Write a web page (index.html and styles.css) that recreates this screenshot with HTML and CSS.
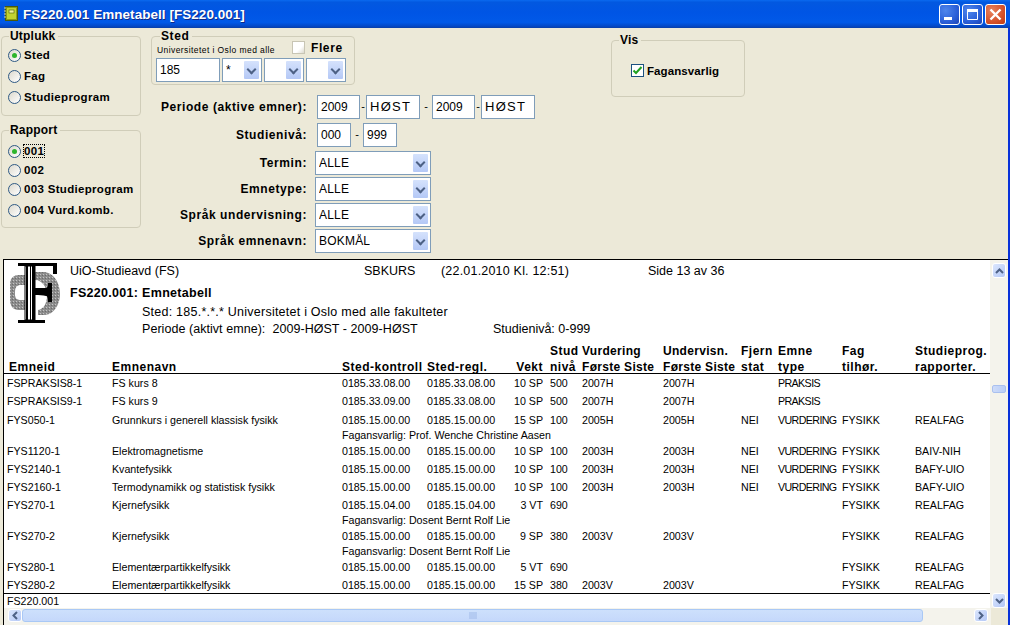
FILE: index.html
```html
<!DOCTYPE html>
<html lang="no">
<head>
<meta charset="utf-8">
<title>FS220.001 Emnetabell</title>
<link rel="stylesheet" href="styles.css">
</head>
<body>
<div class="window">
  <header class="titlebar">
    <svg class="appicon" width="18" height="18" viewBox="0 0 18 18"><rect x="3.500" y="1.500" width="12" height="14" fill="#8a9a18" stroke="#4a5a08"/><rect x="5" y="3" width="9" height="11" fill="#c2d230"/><rect x="7" y="5" width="5" height="3" fill="#f0f29a" stroke="#4a5a08" stroke-width=".6"/><path d="M2 3h2M2 6h2M2 9h2M2 12h2" stroke="#d8d8a0" stroke-width="1.200"/></svg>
    <span class="title">FS220.001 Emnetabell [FS220.001]</span>
    <div class="winbtns">
      <div class="winbtn"><svg width="21" height="21" viewBox="0 0 21 21"><rect x="5" y="13" width="8" height="3" fill="#fff"/></svg></div>
      <div class="winbtn"><svg width="21" height="21" viewBox="0 0 21 21"><path d="M5.500 5.500h10v10h-10z" fill="none" stroke="#fff"/><rect x="5" y="5" width="11" height="3" fill="#fff"/></svg></div>
      <div class="winbtn close"><svg width="21" height="21" viewBox="0 0 21 21"><path d="M5.500 5.500l10 10M15.500 5.500l-10 10" stroke="#fff" stroke-width="2.400"/></svg></div>
    </div>
  </header>

  <section class="form">
    <div class="leftcol">
      <div class="group utplukk">
        <span class="legend">Utplukk</span>
        <div class="radio"><i class="dot on"></i>Sted</div>
        <div class="radio"><i class="dot"></i>Fag</div>
        <div class="radio"><i class="dot"></i>Studieprogram</div>
      </div>
      <div class="group rapport">
        <span class="legend">Rapport</span>
        <div class="radio"><i class="dot on"></i><span class="focus">001</span></div>
        <div class="radio"><i class="dot"></i>002</div>
        <div class="radio"><i class="dot"></i>003 Studieprogram</div>
        <div class="radio"><i class="dot"></i>004 Vurd.komb.</div>
      </div>
    </div>

    <div class="midcol">
      <div class="group sted">
        <span class="legend">Sted</span>
        <div class="stedtop"><span class="stedname">Universitetet i Oslo med alle</span><i class="chk"></i><b class="flere">Flere</b></div>
        <div class="stedrow">
          <div class="inp w64 plain">185</div>
          <div class="combo w40"><span>*</span><i class="arrow"></i></div>
          <div class="combo w40"><span></span><i class="arrow"></i></div>
          <div class="combo w40"><span></span><i class="arrow"></i></div>
        </div>
      </div>
      <div class="fields">
        <div class="field"><label>Periode (aktive emner):</label><div class="inp w43 plain">2009</div><span class="dash">-</span><div class="inp w54 wide">HØST</div><span class="dash sp">-</span><div class="inp w43 plain">2009</div><span class="dash">-</span><div class="inp w54 wide">HØST</div></div>
        <div class="field"><label>Studienivå:</label><div class="inp w34 plain">000</div><span class="dash gap">-</span><div class="inp w34 plain">999</div></div>
        <div class="field sel"><label>Termin:</label><div class="combo w116 big"><span>ALLE</span><i class="arrow"></i></div></div>
        <div class="field sel"><label>Emnetype:</label><div class="combo w116 big"><span>ALLE</span><i class="arrow"></i></div></div>
        <div class="field sel"><label>Språk undervisning:</label><div class="combo w116 big"><span>ALLE</span><i class="arrow"></i></div></div>
        <div class="field sel"><label>Språk emnenavn:</label><div class="combo w116 big"><span>BOKMÅL</span><i class="arrow"></i></div></div>
      </div>
    </div>

    <div class="group vis">
      <span class="legend">Vis</span>
      <div class="vischeck"><i class="chk on"><svg width="11" height="11" viewBox="0 0 11 11"><path d="M1.500 5.500l2.500 2.500 5.500-6" fill="none" stroke="#21a121" stroke-width="2"/></svg></i>Fagansvarlig</div>
    </div>
  </section>

  <section class="report">
    <div class="viewport">
      <div class="page">
        <div class="rephead">
          <svg class="logo" width="56" height="64" viewBox="0 0 56 64">
            <defs><pattern id="st" width="3" height="3" patternUnits="userSpaceOnUse"><rect width="3" height="3" fill="#8c8c8c"/><rect width="1" height="1" fill="#c4c4c4"/><rect x="2" y="1" width="1" height="1" fill="#6c6c6c"/></pattern></defs>
            <path d="M3 22c0-6 4-9 9-9h6v10h-4c-4 0-6 2-6 7v3c0 3 2 5 6 5h4v10h-6c-6 0-9-4-9-10z" fill="url(#st)"/>
            <path d="M28 10h8c10 0 17 10 17 22 0 10-6 21-16 21h-6v-5c6-1 9-7 9-15 0-8-5-15-12-15z" fill="url(#st)"/>
            <path d="M11 1h39v3H11zM11 58h27v3H11zM46 4h4v8h-4z" fill="#000"/>
            <path d="M18 4h10v54H18z" fill="#fff" stroke="#000"/>
            <path d="M19 4h2v54h-2zM23 4h1v54h-1zM25 4h3v54h-3z" fill="#000"/>
            <path d="M28 26h11c1 0 2-1 2-5h4v19h-4c0-5-1-6-2-6-3-1-7-1-11-1z" fill="#000"/>
          </svg>
          <div class="headtext">
            <div class="hl1"><span class="c1">UiO-Studieavd (FS)</span><span class="c2">SBKURS</span><span class="c3">(22.01.2010 Kl. 12:51)</span><span class="c4">Side 13 av 36</span></div>
            <div class="hl2">FS220.001: Emnetabell</div>
            <div class="hl3 sted-line">Sted: 185.*.*.* Universitetet i Oslo med alle fakulteter</div>
            <div class="hl3"><span class="c5">Periode (aktivt emne):&nbsp; 2009-HØST - 2009-HØST</span><span>Studienivå: 0-999</span></div>
          </div>
        </div>

        <div class="row thead">
          <span>Emneid</span><span>Emnenavn</span><span>Sted-kontroll</span><span>Sted-regl.</span><span class="r">Vekt</span>
          <span>Stud<br>nivå</span><span class="stack">Vurdering<br>Første Siste</span><span class="stack">Undervisn.<br>Første Siste</span>
          <span>Fjern<br>stat</span><span>Emne<br>type</span><span>Fag<br>tilhør.</span><span>Studieprog.<br>rapporter.</span>
        </div>

        <div class="rows">
          <div class="row"><span>FSPRAKSIS8-1</span><span>FS kurs 8</span><span>0185.33.08.00</span><span>0185.33.08.00</span><span class="r">10 SP</span><span>500</span><span>2007H</span><span>2007H</span><span></span><span>PRAKSIS</span><span></span><span></span></div>
          <div class="row"><span>FSPRAKSIS9-1</span><span>FS kurs 9</span><span>0185.33.09.00</span><span>0185.33.08.00</span><span class="r">10 SP</span><span>500</span><span>2007H</span><span>2007H</span><span></span><span>PRAKSIS</span><span></span><span></span></div>
          <div class="row"><span>FYS050-1</span><span>Grunnkurs i generell klassisk fysikk</span><span>0185.15.00.00</span><span>0185.15.00.00</span><span class="r">15 SP</span><span>100</span><span>2005H</span><span>2005H</span><span>NEI</span><span>VURDERING</span><span>FYSIKK</span><span>REALFAG</span></div>
          <div class="note">Fagansvarlig: Prof. Wenche Christine Aasen</div>
          <div class="row"><span>FYS1120-1</span><span>Elektromagnetisme</span><span>0185.15.00.00</span><span>0185.15.00.00</span><span class="r">10 SP</span><span>100</span><span>2003H</span><span>2003H</span><span>NEI</span><span>VURDERING</span><span>FYSIKK</span><span>BAIV-NIH</span></div>
          <div class="row"><span>FYS2140-1</span><span>Kvantefysikk</span><span>0185.15.00.00</span><span>0185.15.00.00</span><span class="r">10 SP</span><span>100</span><span>2003H</span><span>2003H</span><span>NEI</span><span>VURDERING</span><span>FYSIKK</span><span>BAFY-UIO</span></div>
          <div class="row"><span>FYS2160-1</span><span>Termodynamikk og statistisk fysikk</span><span>0185.15.00.00</span><span>0185.15.00.00</span><span class="r">10 SP</span><span>100</span><span>2003H</span><span>2003H</span><span>NEI</span><span>VURDERING</span><span>FYSIKK</span><span>BAFY-UIO</span></div>
          <div class="row"><span>FYS270-1</span><span>Kjernefysikk</span><span>0185.15.04.00</span><span>0185.15.04.00</span><span class="r">3 VT</span><span>690</span><span></span><span></span><span></span><span></span><span>FYSIKK</span><span>REALFAG</span></div>
          <div class="note">Fagansvarlig: Dosent Bernt Rolf Lie</div>
          <div class="row"><span>FYS270-2</span><span>Kjernefysikk</span><span>0185.15.00.00</span><span>0185.15.00.00</span><span class="r">9 SP</span><span>380</span><span>2003V</span><span>2003V</span><span></span><span></span><span>FYSIKK</span><span>REALFAG</span></div>
          <div class="note">Fagansvarlig: Dosent Bernt Rolf Lie</div>
          <div class="row"><span>FYS280-1</span><span>Elementærpartikkelfysikk</span><span>0185.15.00.00</span><span>0185.15.00.00</span><span class="r">5 VT</span><span>690</span><span></span><span></span><span></span><span></span><span>FYSIKK</span><span>REALFAG</span></div>
          <div class="row"><span>FYS280-2</span><span>Elementærpartikkelfysikk</span><span>0185.15.00.00</span><span>0185.15.00.00</span><span class="r">15 SP</span><span>380</span><span>2003V</span><span>2003V</span><span></span><span></span><span>FYSIKK</span><span>REALFAG</span></div>
        </div>
        <div class="repfoot">FS220.001</div>
      </div>
      <div class="vscroll">
        <div class="sbtn"><svg width="9" height="6" viewBox="0 0 9 6"><path d="M1 5l3.500-3.500L8 5" fill="none" stroke="#4d6185" stroke-width="2"/></svg></div>
        <div class="vtrack"><div class="vthumb"></div></div>
        <div class="sbtn"><svg width="9" height="6" viewBox="0 0 9 6"><path d="M1 1l3.500 3.500L8 1" fill="none" stroke="#4d6185" stroke-width="2"/></svg></div>
      </div>
    </div>
    <div class="hscroll">
      <div class="sbtn"><svg width="6" height="9" viewBox="0 0 6 9"><path d="M5 1L1.500 4.500 5 8" fill="none" stroke="#4d6185" stroke-width="2"/></svg></div>
      <div class="hthumb"><svg width="8" height="7" viewBox="0 0 8 7"><path d="M1 0v7M3 0v7M5 0v7M7 0v7" stroke="#9fb9e8"/></svg></div>
      <div class="htrack"></div>
      <div class="sbtn"><svg width="6" height="9" viewBox="0 0 6 9"><path d="M1 1l3.500 3.500L1 8" fill="none" stroke="#4d6185" stroke-width="2"/></svg></div>
    </div>
  </section>
</div>
</body>
</html>
```

FILE: styles.css
```css
* { box-sizing: border-box; }
html, body { margin: 0; padding: 0; }
body { width: 1010px; height: 625px; overflow: hidden; background: #ece9d8; font-family: "Liberation Sans", Arial, sans-serif; color: #000; }
.window { width: 1010px; height: 625px; display: flex; flex-direction: column; border-right: 2px solid #0831d9; }

.titlebar { height: 28px; flex: none; display: flex; align-items: center; padding: 0 4px 0 2px; background: linear-gradient(#0a6af0 0, #0258e0 8%, #0055e5 45%, #0159e8 80%, #0349c8 93%, #0a3ea8 100%); margin-right: -2px; }
.appicon { flex: none; margin-right: 3px; }
.title { color: #fff; font: bold 13.500px "Liberation Sans", sans-serif; letter-spacing: .04px; text-shadow: 1px 1px 0 #0f2a86; }
.winbtns { margin-left: auto; display: flex; gap: 2px; }
.winbtn { width: 21px; height: 21px; border: 1px solid #fff; border-radius: 3px; background: radial-gradient(circle at 30% 30%, #4f86ec, #2a5fd8 60%, #1d43b4); }
.winbtn svg { display: block; margin: -1px; }
.winbtn.close { background: radial-gradient(circle at 30% 30%, #e8835e, #d4522b 60%, #c03a10); }

.form { height: 231px; flex: none; display: flex; padding-top: 8px; }
.group { position: relative; border: 1px solid #d0cdb9; border-radius: 4px; }
.legend { position: absolute; top: -8px; left: 7px; background: #ece9d8; padding: 0 3px 0 1px; font-size: 12px; font-weight: bold; line-height: 14px; letter-spacing: .2px; }
.sted .legend { left: 8px; letter-spacing: .6px; }
.leftcol { width: 140px; margin-left: 1px; flex: none; display: flex; flex-direction: column; gap: 14px; }
.utplukk { height: 80px; padding-top: 10px; display: flex; flex-direction: column; gap: 5px; }
.rapport { height: 98px; padding-top: 12px; display: flex; flex-direction: column; gap: 3px; }
.rapport .radio:last-child { margin-top: 2px; }
.radio { display: flex; align-items: center; height: 16px; padding-left: 6px; font-size: 11.500px; font-weight: bold; letter-spacing: .32px; }
.dot { width: 13px; height: 13px; border-radius: 50%; border: 1px solid #2f5a85; background: linear-gradient(135deg, #dcd9cd, #fff); margin-right: 3px; position: relative; flex: none; }
.dot.on::after { content: ""; position: absolute; left: 3px; top: 3px; width: 5px; height: 5px; border-radius: 50%; background: #2db52d; }
.focus { outline: 1px dotted #000; outline-offset: 0; }

.midcol { width: 395px; margin-left: 10px; flex: none; display: flex; flex-direction: column; }
.sted { width: 204px; height: 49px; padding: 6px 4px 0 4px; }
.stedtop { display: flex; align-items: center; height: 14px; }
.stedname { font-size: 8.500px; letter-spacing: .42px; margin-left: 1px; white-space: nowrap; }
.chk { width: 13px; height: 13px; flex: none; display: block; margin: -6px 0 0 17px; background: linear-gradient(135deg, #fff 60%, #dcd9cd); border: 1px solid #c8c5b4; }
.flere { font-size: 12px; letter-spacing: .6px; margin: -4px 0 0 6px; }
.stedrow { display: flex; gap: 2px; margin-top: 1px; }

.inp, .combo { height: 24px; border: 1px solid #7f9db9; background: #fff; display: flex; align-items: center; flex: none; }
.inp.plain { font-size: 12px; padding-left: 3px; }
.inp.w64 { width: 64px; }
.inp.w43 { width: 43px; }
.inp.w54 { width: 54px; }
.inp.w34 { width: 34px; }
.inp.wide { font-size: 13px; letter-spacing: 1.250px; padding-left: 3px; }
.w40 { width: 40px; }
.w116 { width: 116px; margin-left: -2px; }
.combo { padding: 2px 2px 2px 3px; justify-content: space-between; font-size: 12px; }
.combo span { overflow: hidden; }
.combo.big span { letter-spacing: .2px; }
.arrow { width: 15px; height: 18px; border-radius: 1px; background: linear-gradient(#d5e2fc, #b4c8f6); position: relative; flex: none; display: block; }
.arrow::after { content: ""; position: absolute; left: 4px; top: 5px; width: 5px; height: 5px; border-right: 2px solid #4d6185; border-bottom: 2px solid #4d6185; transform: rotate(45deg); }

.fields { padding-top: 9px; display: flex; flex-direction: column; }
.field { display: flex; align-items: center; height: 26px; }
.field:first-child { height: 25px; }
.field:nth-child(2) { height: 31px; }
.field label { width: 156px; text-align: right; margin-right: 10px; font-size: 12px; font-weight: bold; letter-spacing: .58px; white-space: nowrap; flex: none; }
.dash { width: 4px; text-align: center; font-size: 11px; flex: none; margin: 0 1px 2px 1px; }
.dash.sp { margin: 0 4px 2px 4px; }
.dash.gap { margin: 0 4px 2px 4px; }

.vis { width: 134px; height: 57px; margin-left: 65px; margin-top: 4px; }
.vischeck { display: flex; align-items: center; margin: 23px 0 0 19px; font-size: 11.500px; font-weight: bold; letter-spacing: .1px; }
.chk.on { width: 13px; height: 13px; border: 1px solid #1c5180; background: #fff; margin: 0 3px 0 0; padding: 0; }
.chk.on svg { display: block; }

.report { flex: 1; min-height: 0; margin-left: 3px; border-top: 1px solid #000; border-left: 1px solid #000; display: flex; flex-direction: column; }
.viewport { flex: 1; min-height: 0; display: flex; }
.page { flex: 1; min-width: 0; background: #fff; display: flex; flex-direction: column; }
.rephead { height: 83px; display: flex; flex: none; }
.logo { flex: none; margin: 2px 0 0 3px; }
.headtext { padding: 2px 0 0 7px; }
.hl1 { display: flex; font-size: 12.500px; height: 21px; line-height: 19px; white-space: nowrap; }
.c1 { width: 294px; } .c2 { width: 77px; } .c3 { width: 207px; letter-spacing: .2px; }
.hl2 { font-size: 12.500px; font-weight: bold; height: 20px; line-height: 20px; letter-spacing: .3px; }
.hl3 { font-size: 12.500px; height: 17px; line-height: 18px; padding-left: 72px; display: flex; white-space: nowrap; }
.sted-line { letter-spacing: .24px; }
.c5 { width: 351px; letter-spacing: .05px; }

.row { display: grid; grid-template-columns: 105px 230px 85px 72px 51px 32px 81px 78px 37px 64px 73px 1fr; padding-left: 3px; font-size: 10.670px; height: 18px; line-height: 18px; white-space: nowrap; }
.row .r { text-align: right; margin-right: 7px; }
.rows .row > span:nth-child(10) { letter-spacing: -.6px; }
.thead { height: 31px; padding-bottom: 1px; font-weight: bold; font-size: 12px; line-height: 16px; letter-spacing: .5px; border-bottom: 1px solid #000; align-items: end; flex: none; }
.thead > span:first-child { padding-left: 2px; }
.thead .stack { letter-spacing: .3px; }
.rows { flex: 1; min-height: 0; overflow: hidden; }
.rows .row:nth-child(2) { height: 19px; }
.note { height: 13px; line-height: 13px; padding-left: 338px; font-size: 10.670px; }
.repfoot { flex: none; height: 15px; line-height: 15px; border-top: 1px solid #000; font-size: 10.670px; padding-left: 3px; }

.vscroll { width: 18px; flex: none; display: flex; flex-direction: column; align-items: flex-start; background: #f4f3ec; padding-top: 3px; }
.vtrack { flex: 1; position: relative; align-self: stretch; }
.vthumb { position: absolute; top: 107px; left: 2px; width: 14px; height: 8px; background: linear-gradient(90deg, #cddbf9, #b9cdf6); border-radius: 2px; border: 1px solid #a9c0ef; }
.sbtn { width: 14px; height: 15px; flex: none; display: flex; align-items: center; justify-content: center; background: linear-gradient(135deg, #dbe6fd, #b4c8f6); border: 1px solid #fff; border-radius: 3px; }
.vscroll .sbtn { margin-left: 2px; }
.hscroll { flex: none; height: 17px; display: flex; background: #f4f3ec; margin-right: 17px; padding: 1px 3px 3px 4px; }
.hscroll .sbtn { height: 13px; }
.hthumb { flex: none; width: 901px; display: flex; align-items: center; justify-content: center; background: linear-gradient(#cde0fc, #c5d8fb); border: 1px solid #a9c8f5; border-radius: 3px; }
.htrack { flex: 1; }
```
